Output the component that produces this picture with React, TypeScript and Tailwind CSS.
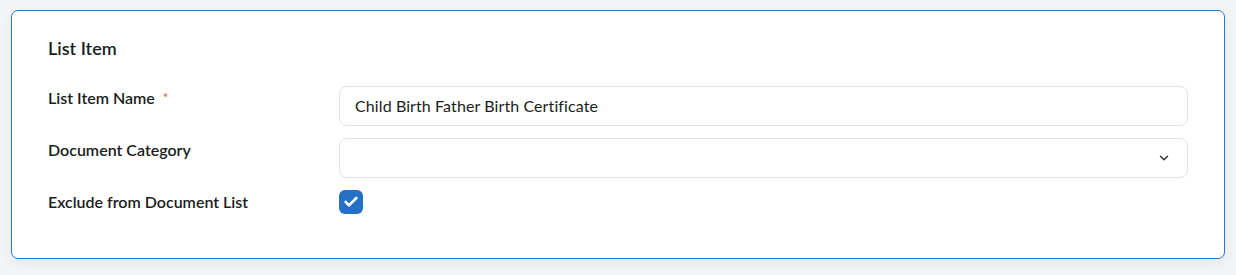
import React from 'react';
import { ChevronDown, Check } from 'lucide-react';

export default function App() {
  return (
    <div className="min-h-[275px] bg-[#f3f4f6] px-[11px] pt-[10px] pb-[16px]" style={{ fontFamily: 'Lato, "Open Sans", sans-serif' }}>
      <div className="bg-white border border-[#2b74c7] rounded-[7px] shadow-[0_4px_12px_rgba(0,0,0,0.06)] pl-[36px] pr-[36px] pt-[25px] pb-[44px]">
        <h2 className="text-[18px] leading-6 font-semibold text-[#1a1d21]">List Item</h2>

        <div className="mt-[26px] flex flex-col gap-3">
          {/* name */}
          <div className="flex">
            <label className="w-[291px] shrink-0 text-[16px] leading-6 font-semibold text-[#1a1d21]">
              List Item Name <span className="ml-1 text-[13px] text-[#e8623c] font-normal align-top">*</span>
            </label>
            <div className="flex-1 h-10 rounded-lg border border-[#e2e3e8] flex items-center px-[15px] text-[16px] tracking-[0.1px] text-[#1a1d21]">
              Child Birth Father Birth Certificate
            </div>
          </div>

          {/* category */}
          <div className="flex">
            <label className="w-[291px] shrink-0 text-[16px] leading-6 font-semibold text-[#1a1d21]">
              Document Category
            </label>
            <div className="flex-1 h-10 rounded-lg border border-[#e2e3e8] flex items-center justify-end pr-[16px]">
              <ChevronDown className="w-[14px] h-[14px] text-[#333]" strokeWidth={2.5} />
            </div>
          </div>

          {/* exclude */}
          <div className="flex items-center">
            <label className="w-[291px] shrink-0 text-[16px] leading-6 font-semibold text-[#1a1d21]">
              Exclude from Document List
            </label>
            <div className="w-6 h-6 rounded-[6px] bg-[#2370c4] flex items-center justify-center">
              <Check className="w-4 h-4 text-white" strokeWidth={4} />
            </div>
          </div>
        </div>
      </div>
    </div>
  );
}
